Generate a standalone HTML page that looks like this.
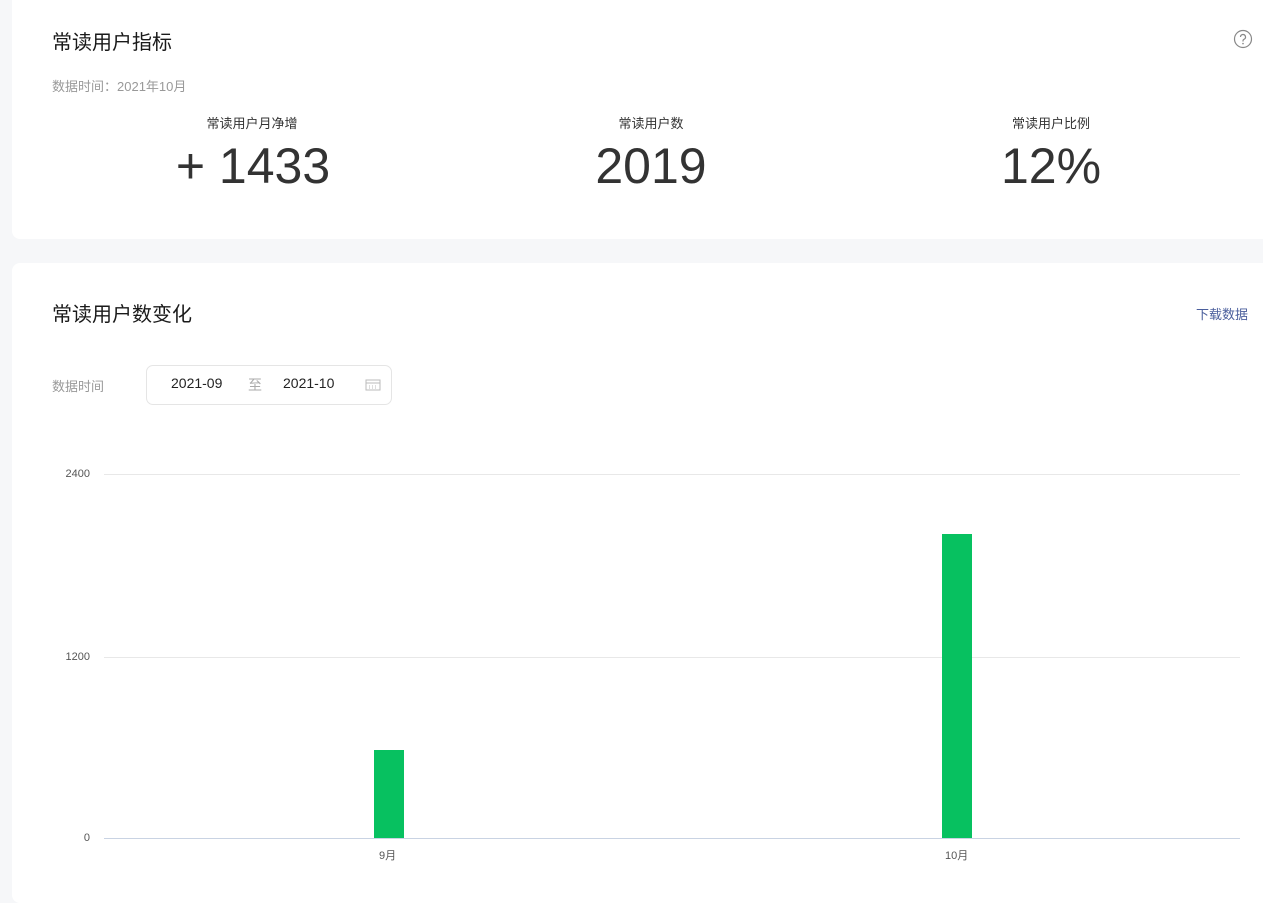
<!DOCTYPE html>
<html><head><meta charset="utf-8"><style>
body{margin:0;width:1263px;height:876px;overflow:hidden;background:#f6f7f9;font-family:"Liberation Sans","Noto Sans CJK SC",sans-serif;position:relative}
.card{position:absolute;left:12px;width:1270px;background:#fff;border-radius:8px}
.a{position:absolute;white-space:nowrap}
.t{font-size:20px;color:#1a1a1a}
.g{font-size:13px;color:#999}
.lbl{font-size:13px;color:#333;width:200px;text-align:center}
.num{font-size:50px;color:#333;width:300px;text-align:center;line-height:52px}
.line{position:absolute;left:104px;width:1136px;height:1px;background:#e8e8e8}
.yl{position:absolute;font-size:11px;color:#555;width:40px;text-align:right;left:50px}
</style></head><body>
<div class="card" style="top:-10px;height:249px"></div>
<div class="card" style="top:263px;height:640px"></div>
<div class="a t" style="left:52px;top:26px">常读用户指标</div>
<svg class="a" style="left:1233px;top:29px" width="20" height="20" viewBox="0 0 20 20"><circle cx="10" cy="10" r="8.5" fill="none" stroke="#888" stroke-width="1.2"/><path d="M7.5 8a2.5 2.5 0 1 1 3.5 2.3c-.7.3-1 .8-1 1.5v.7" fill="none" stroke="#888" stroke-width="1.2"/><circle cx="10" cy="14.6" r=".8" fill="#888"/></svg>
<div class="a g" style="left:52px;top:76px">数据时间：2021年10月</div>
<div class="a lbl" style="left:152px;top:113px">常读用户月净增</div>
<div class="a lbl" style="left:551px;top:113px">常读用户数</div>
<div class="a lbl" style="left:951px;top:113px">常读用户比例</div>
<div class="a num" style="left:103px;top:140px">+ 1433</div>
<div class="a num" style="left:501px;top:140px">2019</div>
<div class="a num" style="left:901px;top:140px">12%</div>
<div class="a t" style="left:52px;top:298px">常读用户数变化</div>
<div class="a" style="left:1196px;top:304px;font-size:13px;color:#4a5e9c">下载数据</div>
<div class="a g" style="left:52px;top:376px">数据时间</div>
<div class="a" style="left:146px;top:365px;width:244px;height:38px;border:1px solid #e5e5e5;border-radius:7px"></div>
<div class="a" style="left:171px;top:375px;font-size:14px;color:#222">2021-09</div>
<div class="a" style="left:248px;top:375px;font-size:14px;color:#aaa">至</div>
<div class="a" style="left:283px;top:375px;font-size:14px;color:#222">2021-10</div>
<svg class="a" style="left:365px;top:378px" width="16" height="14" viewBox="0 0 16 14"><rect x="1" y="2" width="14" height="10" fill="none" stroke="#bbb"/><path d="M1 5h14M4 8h1M7 8h1M10 8h1M4 10h1M7 10h1M10 10h1" stroke="#bbb"/></svg>
<div class="line" style="top:474px"></div>
<div class="line" style="top:657px"></div>
<div class="line" style="top:838px;background:#c9d3e3"></div>
<div class="yl" style="top:468px">2400</div>
<div class="yl" style="top:651px">1200</div>
<div class="yl" style="top:832px">0</div>
<div class="a" style="left:374px;top:750px;width:30px;height:88px;background:#07c160"></div>
<div class="a" style="left:942px;top:534px;width:30px;height:304px;background:#07c160"></div>
<div class="a" style="left:379px;top:847px;font-size:11px;color:#555">9月</div>
<div class="a" style="left:945px;top:847px;font-size:11px;color:#555">10月</div>
</body></html>
